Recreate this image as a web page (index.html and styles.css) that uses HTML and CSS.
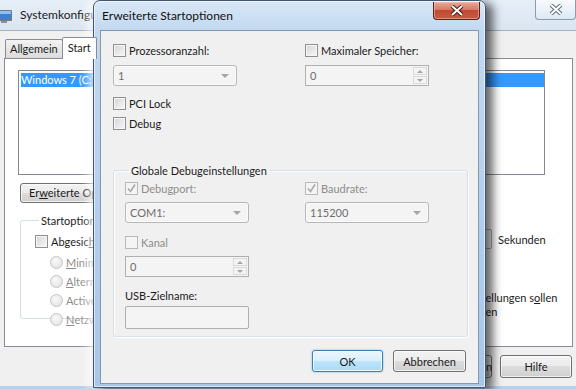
FILE: index.html
```html
<!DOCTYPE html>
<html lang="de">
<head>
    <meta charset="UTF-8">
    <title>Systemkonfiguration - Erweiterte Startoptionen</title>
    <link rel="stylesheet" href="styles.css">
</head>
<body>
<div class="screen">

    <!-- background window: Systemkonfiguration -->
    <div class="syswin">
        <div class="sys-title">
            <svg class="app-icon" width="14" height="16" viewBox="0 0 14 16">
                <rect x="-4" y="2" width="16" height="11" rx="1" fill="#6f7a86"/>
                <rect x="-3" y="3" width="14" height="8" fill="#3d7fd6"/>
                <rect x="-3" y="3" width="14" height="3" fill="#8dc0f2"/>
                <rect x="1" y="13" width="6" height="2" fill="#8a939c"/>
            </svg>
            <span class="caption">Systemkonfiguration</span>
            <span class="close-btn inactive">
                <svg width="14" height="11" viewBox="0 0 14 11"><path d="M2 1 L12 10 M12 1 L2 10" stroke="#5d6b7b" stroke-width="4"/><path d="M2 1 L12 10 M12 1 L2 10" stroke="#fff" stroke-width="2"/></svg>
            </span>
        </div>
        <div class="sys-client">
            <div class="tabs">
                <span class="tab">Allgemein</span>
                <span class="tab active">Start</span>
                <span class="tab">Dienste</span>
                <span class="tab">Systemstart</span>
                <span class="tab">Tools</span>
            </div>
            <div class="tab-panel">
                <div class="listbox">
                    <div class="list-item selected">Windows 7 (C:\Windows) : Aktuelles Betriebssystem; Standardbetriebssystem</div>
                </div>
                <div class="panel-actions">
                    <button class="btn">Er<u>w</u>eiterte Optionen...</button>
                </div>
                <div class="panel-main">
                    <fieldset class="group start-group">
                        <legend>Startoptionen</legend>
                        <label class="check"><span class="box"></span>Abgesic<u>h</u>erter Start</label>
                        <label class="radio disabled first"><span class="dot"></span><u>M</u>inimal</label>
                        <label class="radio disabled"><span class="dot"></span><u>A</u>lternative Shell</label>
                        <label class="radio disabled"><span class="dot"></span>Active Directory-Reparatur</label>
                        <label class="radio disabled"><span class="dot"></span><u>N</u>etzwerk</label>
                    </fieldset>
                    <div class="side-options">
                        <div class="timeout">
                            <span class="timeout-label">Timeout:</span>
                            <span class="textbox small">30</span>
                            <span>Sekunden</span>
                        </div>
                        <label class="check permanent"><span class="box"></span><span>Alle Starteinstellungen s<u>o</u>llen<br>dauerhaft gelten</span></label>
                    </div>
                </div>
            </div>
            <div class="sys-buttons">
                <button class="btn wide">OK</button>
                <button class="btn wide">Abbrechen</button>
                <button class="btn wide">Übernehmen</button>
                <button class="btn wide">Hilfe</button>
            </div>
        </div>
    </div>

    <!-- modal dialog -->
    <div class="dialog">
        <div class="dlg-title">
            <span class="caption">Erweiterte Startoptionen</span>
            <span class="close-btn active">
                <svg width="14" height="11" viewBox="0 0 14 11"><path d="M2 1 L12 10 M12 1 L2 10" stroke="#4b1a14" stroke-width="4"/><path d="M2 1 L12 10 M12 1 L2 10" stroke="#fff" stroke-width="2"/></svg>
            </span>
        </div>
        <div class="dlg-client">
            <div class="opt-grid">
                <div class="col">
                    <label class="check"><span class="box"></span>Prozessoranzahl:</label>
                    <div class="combo"><span>1</span><span class="arrow"></span></div>
                    <label class="check pci"><span class="box"></span>PCI Lock</label>
                    <label class="check debug"><span class="box"></span>Debug</label>
                </div>
                <div class="col">
                    <label class="check"><span class="box"></span>Maximaler Speicher:</label>
                    <div class="spin"><span class="value">0</span><span class="spin-btns"><span class="up"></span><span class="down"></span></span></div>
                </div>
            </div>

            <fieldset class="group debug-group">
                <legend>Globale Debugeinstellungen</legend>
                <div class="opt-grid inner">
                    <div class="col">
                        <label class="check disabled"><span class="box"><svg width="11" height="11" viewBox="0 0 11 11"><path d="M2 5.5 L4.5 8.5 L9 1.5" fill="none" stroke="#a9a9a9" stroke-width="1.6"/></svg></span>Debugport:</label>
                        <div class="combo"><span>COM1:</span><span class="arrow"></span></div>
                        <label class="check disabled kanal"><span class="box"></span>Kanal</label>
                        <div class="spin"><span class="value">0</span><span class="spin-btns"><span class="up"></span><span class="down"></span></span></div>
                        <div class="field-label">USB-Zielname:</div>
                        <div class="textbox"></div>
                    </div>
                    <div class="col">
                        <label class="check disabled"><span class="box"><svg width="11" height="11" viewBox="0 0 11 11"><path d="M2 5.5 L4.5 8.5 L9 1.5" fill="none" stroke="#a9a9a9" stroke-width="1.6"/></svg></span>Baudrate:</label>
                        <div class="combo"><span>115200</span><span class="arrow"></span></div>
                    </div>
                </div>
            </fieldset>

            <div class="dlg-buttons">
                <button class="btn default">OK</button>
                <button class="btn cancel">Abbrechen</button>
            </div>
        </div>
    </div>
</div>
</body>
</html>
```

FILE: styles.css
```css
body {
    margin: 0;
    font-family: Lato, "Noto Sans", sans-serif;
    font-size: 11px;
    color: #1b1b1b;
    background: #7d9cc0;
    overflow: hidden;
}

.screen {
    position: relative;
    width: 576px;
    height: 389px;
    overflow: hidden;
}

u {
    text-decoration: underline;
}

/* ---- background window ---- */

.syswin {
    height: 389px;
    display: flex;
    flex-direction: column;
    background: linear-gradient(#e6eef7, #dbe6f2 30px, #b9d0ea);
}

.sys-title {
    height: 30px;
    display: flex;
    align-items: flex-start;
    flex-shrink: 0;
}

.app-icon {
    margin-top: 8px;
}

.caption {
    font-size: 12px;
}

.sys-title .caption {
    margin: 7px 0 0 6px;
    line-height: 16px;
    color: #1a1a1a;
}

.close-btn {
    margin-left: auto;
    display: flex;
    align-items: center;
    justify-content: center;
    box-sizing: border-box;
    height: 20px;
    border-radius: 0 0 4px 4px;
}

.close-btn.inactive {
    width: 41px;
    border: 1px solid #8a9cb2;
    border-top: none;
    background: linear-gradient(rgba(255, 255, 255, 0.7), rgba(220, 232, 245, 0.6));
}

.sys-client {
    flex: 1;
    display: flex;
    flex-direction: column;
    background: #f0f0f0;
    border-top: 1px solid #a2b2c6;
    margin-bottom: 3px;
}

.tabs {
    display: flex;
    align-items: flex-end;
    padding-left: 5px;
    height: 28px;
    margin-bottom: -1px;
}

.tab {
    box-sizing: border-box;
    height: 19px;
    line-height: 17px;
    padding: 0 4px;
    border: 1px solid #898c95;
    border-bottom: none;
    border-radius: 2px 2px 0 0;
    background: linear-gradient(#f3f3f3, #e6e6e6 50%, #dcdcdc);
    margin-bottom: 1px;
}

.tab + .tab {
    margin-left: -1px;
}

.tab.active {
    height: 22px;
    margin: 0 0 0 -1px;
    padding: 1px 5px 0;
    background: #fff;
    position: relative;
    z-index: 1;
}

.tab-panel {
    height: 276px;
    margin: 0 3px 0 4px;
    border: 1px solid #898c95;
    background: #fff;
    padding: 11px 0 0 13px;
}

.listbox {
    box-sizing: border-box;
    width: 527px;
    height: 105px;
    border: 1px solid #828790;
    padding: 2px 0 0 2px;
}

.list-item {
    line-height: 14px;
    white-space: nowrap;
    overflow: hidden;
}

.list-item.selected {
    background: #3399ff;
    color: #fff;
}

.panel-actions {
    margin-top: 8px;
    padding-left: 2px;
}

.btn {
    font: inherit;
    color: #1b1b1b;
    box-sizing: border-box;
    height: 22px;
    padding: 0 8px;
    border: 1px solid #707070;
    border-radius: 3px;
    background: linear-gradient(#f2f2f2, #ebebeb 50%, #dddddd 50%, #cfcfcf);
    box-shadow: inset 0 0 0 1px rgba(255, 255, 255, 0.7);
}

.panel-actions .btn {
    height: 20px;
    line-height: 16px;
}

.panel-main {
    display: flex;
    margin-top: 10px;
    padding-left: 2px;
}

.group {
    margin: 0;
    border: 1px solid #d5dfe5;
    border-radius: 3px;
    box-shadow: inset 1px 1px 0 #fff, 1px 1px 0 #fff;
}

.group legend {
    padding: 0 2px;
    margin-left: 4px;
    line-height: 15px;
}

.start-group {
    width: 260px;
    height: 98px;
    padding: 6px 0 0 14px;
}

.check {
    display: flex;
    align-items: center;
    height: 15px;
    white-space: nowrap;
}

.box {
    box-sizing: border-box;
    width: 13px;
    height: 13px;
    margin-right: 3px;
    flex-shrink: 0;
    border: 1px solid #8f8f8f;
    background: linear-gradient(135deg, #d3d5d8, #f8f8f8);
    box-shadow: inset 0 0 0 1px #f6f6f6;
    display: flex;
    align-items: center;
    justify-content: center;
}

.check.disabled {
    color: #8d8d8d;
}

.check.disabled .box {
    border-color: #b9b9b9;
    background: #f4f4f4;
    box-shadow: none;
}

.radio {
    display: flex;
    align-items: center;
    height: 15px;
    margin: 4px 0 0 15px;
    white-space: nowrap;
}

.radio.first {
    margin-top: 6px;
}

.radio.disabled {
    color: #8d8d8d;
}

.dot {
    box-sizing: border-box;
    width: 13px;
    height: 13px;
    margin-right: 3px;
    border-radius: 50%;
    border: 1px solid #c4c4c4;
    background: radial-gradient(circle at 40% 35%, #fafafa, #dedede);
}

.side-options {
    padding: 16px 0 0 0;
    flex: 1;
}

.timeout {
    display: flex;
    align-items: center;
    height: 20px;
}

.timeout-label {
    width: 144px;
    padding-left: 20px;
    box-sizing: border-box;
}

.textbox {
    box-sizing: border-box;
    height: 23px;
    border: 1px solid #afafaf;
    border-radius: 2px;
    background: #f4f4f4;
}

.textbox.small {
    width: 52px;
    height: 20px;
    margin-right: 6px;
    padding-left: 3px;
    line-height: 18px;
    background: #fff;
    border-color: #abadb3;
}

.check.permanent {
    align-items: flex-start;
    height: auto;
    margin: 42px 0 0 106px;
    line-height: 14px;
}

.check.permanent .box {
    margin-top: 1px;
}

.sys-buttons {
    display: flex;
    justify-content: flex-end;
    gap: 8px;
    margin-top: 8px;
    padding-right: 4px;
}

.btn.wide {
    width: 72px;
    height: 23px;
}

/* ---- dialog ---- */

.dialog {
    position: absolute;
    left: 93px;
    top: 0;
    width: 393px;
    height: 388px;
    box-sizing: border-box;
    display: flex;
    flex-direction: column;
    padding: 0 6px 3px;
    border: 1px solid #3f5570;
    border-radius: 7px 7px 0 0;
    background: linear-gradient(#d9e7f6, #c2d8f0 30px, #b1cdee 60%, #a9c6e9);
    box-shadow: 7px 3px 10px rgba(0, 0, 0, 0.6), -5px 0 8px rgba(255, 255, 255, 0.75), inset 0 0 0 1px rgba(255, 255, 255, 0.6);
}

.dlg-title {
    height: 29px;
    display: flex;
    align-items: flex-start;
    flex-shrink: 0;
}

.dlg-title .caption {
    margin: 7px 0 0 2px;
    line-height: 16px;
    color: #111;
}

.close-btn.active {
    width: 47px;
    height: 18px;
    margin: 1px -1px 0 auto;
    border: 1px solid #5a2219;
    border-top: none;
    background: linear-gradient(#e9a99a, #d67b66 45%, #c24a33 50%, #c65b42);
    box-shadow: inset 0 0 0 1px rgba(255, 200, 190, 0.5);
}

.dlg-client {
    flex: 1;
    border: 1px solid #8497ae;
    background: #f0f0f0;
    padding: 12px 0 0 12px;
}

.opt-grid {
    display: grid;
    grid-template-columns: 192px 1fr;
}

.opt-grid.inner {
    grid-template-columns: 180px 1fr;
}

.col {
    display: flex;
    flex-direction: column;
    align-items: flex-start;
}

.combo,
.spin {
    box-sizing: border-box;
    width: 124px;
    height: 21px;
    margin-top: 7px;
    display: flex;
    align-items: center;
    color: #6d6d6d;
    background: #f4f4f4;
}

.combo {
    border: 1px solid #b7b7b7;
    border-radius: 3px;
    padding-left: 4px;
    box-shadow: inset 0 0 0 1px #fbfbfb;
}

.combo .arrow {
    margin-left: auto;
    margin-right: 7px;
    border-left: 4px solid transparent;
    border-right: 4px solid transparent;
    border-top: 4px solid #a5a5a5;
}

.spin {
    border: 1px solid #b0b0b0;
    padding-left: 4px;
    justify-content: space-between;
}

.spin-btns {
    display: flex;
    flex-direction: column;
    gap: 1px;
    padding: 1px;
    align-self: stretch;
}

.spin-btns span {
    flex: 1;
    width: 14px;
    box-sizing: border-box;
    border: 1px solid #dadada;
    background: #f4f4f4;
    display: flex;
    align-items: center;
    justify-content: center;
}

.spin-btns span::after {
    content: "";
    border-left: 3px solid transparent;
    border-right: 3px solid transparent;
}

.spin-btns .up::after {
    border-bottom: 3px solid #a5a5a5;
}

.spin-btns .down::after {
    border-top: 3px solid #a5a5a5;
}

.check.pci {
    margin-top: 10px;
}

.check.debug {
    margin-top: 5px;
}

.debug-group {
    width: 355px;
    box-sizing: border-box;
    margin-top: 32px;
    padding: 3px 0 7px 11px;
}

.debug-group .combo,
.debug-group .spin {
    margin-top: 6px;
}

.check.kanal {
    margin-top: 12px;
}

.field-label {
    margin-top: 11px;
    line-height: 15px;
}

.debug-group .textbox {
    width: 124px;
    margin-top: 3px;
}

.dlg-buttons {
    display: flex;
    justify-content: flex-end;
    gap: 10px;
    margin: 13px 12px 0 0;
}

.dlg-buttons .btn {
    height: 22px;
}

.btn.default {
    width: 71px;
    border-color: #3c7fb1;
    background: linear-gradient(#eaf6fd, #d9f0fc 50%, #bee6fd 50%, #a7d9f5);
    box-shadow: inset 0 0 0 1px rgba(255, 255, 255, 0.8), 0 0 2px #5ab4e8;
}

.btn.cancel {
    width: 73px;
}
```
